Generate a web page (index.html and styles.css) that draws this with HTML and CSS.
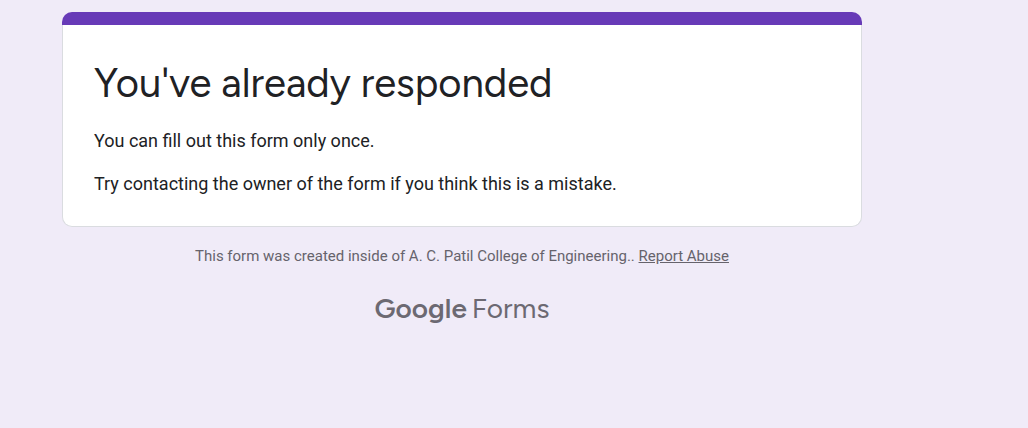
FILE: index.html
```html
<!DOCTYPE html>
<html lang="en">
<head>
<meta charset="utf-8">
<title>You've already responded</title>
<link rel="stylesheet" href="styles.css">
</head>
<body>
<div class="page">
<main class="card">
<div class="card-accent"></div>
<div class="card-body">
<h1 class="title">You've already responded</h1>
<p class="message">You can fill out this form only once.</p>
<p class="message">Try contacting the owner of the form if you think this is a mistake.</p>
</div>
</main>
<footer class="footer">
<p class="disclaimer">This form was created inside of A. C. Patil College of Engineering.. <a class="report" href="#report">Report Abuse</a></p>
<a class="brand" href="#about" aria-label="Google Forms"><span class="brand-name">Google</span><span class="brand-product">Forms</span></a>
</footer>
</div>
</body>
</html>
```
FILE: styles.css
```css
* {
  box-sizing: border-box;
}

body {
  margin: 0;
  min-height: 100vh;
  background: #f0ebf8;
  color: #202124;
  font-family: Roboto, sans-serif;
}

.page {
  max-width: 924px;
  padding: 12px 62px;
}

.card-accent {
  height: 13px;
  border-radius: 10px 10px 0 0;
  background: #673ab7;
}

.card-body {
  padding: 33px 31px 30px;
  border: 1px solid #dadce0;
  border-top: 0;
  border-radius: 0 0 10px 10px;
  background: #fff;
}

.title {
  margin: 0 0 20px;
  font: 400 40px/50px Figtree, Lato, sans-serif;
}

.message {
  margin: 0 0 18px;
  font-size: 18px;
  line-height: 25px;
}

.message:last-child {
  margin-bottom: 0;
}

.footer {
  display: flex;
  flex-direction: column;
  align-items: center;
  padding-top: 19px;
  gap: 25px;
}

.disclaimer {
  margin: 0;
  color: #66636c;
  font-size: 15px;
  line-height: 20px;
}

.report {
  color: inherit;
}

.brand {
  display: flex;
  align-items: baseline;
  gap: 5px;
  color: #6c6972;
  font: 400 28px/34px Figtree, Lato, sans-serif;
  text-decoration: none;
}

.brand-name {
  font-weight: 600;
}
```
